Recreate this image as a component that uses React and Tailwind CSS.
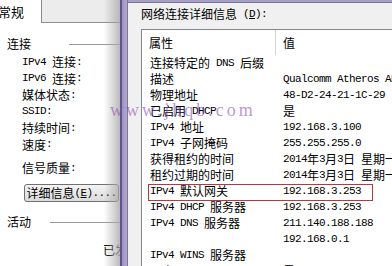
import React from "react";

function T({ s }) {
  return s
    .split(/([\x00-\x7f]+)/)
    .filter(Boolean)
    .map((p, i) =>
      /[\x00-\x7f]/.test(p[0]) ? (
        <span
          key={i}
          className="font-['Liberation_Mono',monospace] text-[11px] tracking-[-0.6px] whitespace-pre leading-none"
        >
          {p}
        </span>
      ) : (
        <span key={i} className="text-[12px] leading-none">
          {p}
        </span>
      )
    );
}

const rows = [
  ["连接特定的 DNS 后缀", ""],
  ["描述", "Qualcomm Atheros AR9285 Wireless Network Adapter"],
  ["物理地址", "48-D2-24-21-1C-29"],
  ["已启用 DHCP", "是"],
  ["IPv4 地址", "192.168.3.100"],
  ["IPv4 子网掩码", "255.255.255.0"],
  ["获得租约的时间", "2014年3月3日 星期一 9:12:32"],
  ["租约过期的时间", "2014年3月3日 星期一 11:12:32"],
  ["IPv4 默认网关", "192.168.3.253"],
  ["IPv4 DHCP 服务器", "192.168.3.253"],
  ["IPv4 DNS 服务器", "211.140.188.188"],
  ["", "192.168.0.1"],
  ["IPv4 WINS 服务器", ""],
  ["已启用 NetBIOS over Tcpip", "是"],
];

function LeftRow({ s, h = "h-[16.5px]" }) {
  return (
    <div className={`${h} flex items-center pl-[22px] whitespace-nowrap`}>
      <T s={s} />
    </div>
  );
}

export default function App() {
  return (
    <div className="relative w-[392px] h-[266px] overflow-hidden flex bg-[#f0f0f0] text-black font-['Noto_Sans_CJK_SC',sans-serif]">
      {/* Left panel */}
      <div className="relative w-[120px] h-full overflow-hidden bg-white flex flex-col shrink-0">
        <div className="h-[23px] flex shrink-0">
          <div className="w-[44px] bg-white border-r border-[#898c95] flex items-center -ml-[2px]">
            <span className="text-[13px] leading-none">常规</span>
          </div>
          <div className="flex-1 bg-[#ececec] border-b border-[#898c95]" />
        </div>
        <div className="mt-[13px] h-[16px] flex items-center pl-[7px]">
          <span className="text-[12px] leading-none">连接</span>
          <div className="ml-[38px] flex-1 h-px bg-[#9a9a9a]" />
        </div>
        <div className="mt-[2px]">
          <LeftRow s="IPv4 连接:" />
          <LeftRow s="IPv6 连接:" />
          <LeftRow s="媒体状态:" />
          <LeftRow s="SSID:" />
          <LeftRow s="持续时间:" />
          <LeftRow s="速度:" />
        </div>
        <div className="mt-[7px]">
          <LeftRow s="信号质量:" h="h-[16px]" />
        </div>
        <div className="mt-[8px] ml-[24px] w-[95px] h-[18px] rounded-[3px] border border-[#707070] bg-gradient-to-b from-[#f4f4f4] to-[#dcdcdc] flex items-center justify-center whitespace-nowrap">
          <span className="text-[12px] leading-none">详细信息</span>
          <span className="font-['Liberation_Mono',monospace] text-[11px] tracking-[-0.6px] leading-none whitespace-pre">
            (<span className="underline">E</span>)....
          </span>
        </div>
        <div className="mt-[12px] h-[16px] flex items-center pl-[7px]">
          <span className="text-[12px] leading-none">活动</span>
          <div className="ml-[19px] flex-1 h-px bg-[#9a9a9a]" />
        </div>
        <div className="mt-[12px] h-[16px] flex items-center pl-[103px] whitespace-nowrap">
          <span className="text-[12px] leading-none">已发送</span>
        </div>
        <div className="absolute right-0 top-0 bottom-0 w-[16px] bg-gradient-to-r from-transparent to-[#a9a9a9]/80" />
      </div>

      {/* Window frame */}
      <div className="w-[8px] h-full flex shrink-0">
        <div className="w-[2px] bg-[#5f5388]" />
        <div className="w-[5px] bg-gradient-to-r from-[#9d92c4] to-[#b2a9d2]" />
        <div className="w-[1px] bg-[#7b7890]" />
      </div>

      {/* Right dialog */}
      <div className="flex-1 h-full flex flex-col min-w-0">
        <div className="h-[2px] bg-[#a79dc9] shrink-0" />
        <div className="h-px bg-[#7b7890] shrink-0" />
        <div className="flex-1 flex flex-col pl-[13px] min-h-0">
          <div className="mt-[4px] h-[14px] flex items-center whitespace-nowrap">
            <span className="text-[12px] leading-none">网络连接详细信息</span>
            <span className="font-['Liberation_Mono',monospace] text-[11px] tracking-[-0.6px] leading-none whitespace-pre">
              {" ("}
              <span className="underline">D</span>
              {"):"}
            </span>
          </div>
          <div className="mt-[8px] flex-1 bg-white border-l border-t border-[#828790] flex flex-col min-h-0 overflow-hidden">
            <div className="h-[25px] flex shrink-0">
              <div className="w-[134px] border-r border-[#d5d5d5] flex items-center pl-[7px] shrink-0">
                <span className="text-[12px] leading-none">属性</span>
              </div>
              <div className="flex-1 flex items-center pl-[7px]">
                <span className="text-[12px] leading-none">值</span>
              </div>
            </div>
            {rows.map(([k, v], i) => (
              <div key={i} className="relative h-[16px] flex shrink-0 whitespace-nowrap">
                <div className="w-[134px] flex items-center pl-[8px] shrink-0 overflow-hidden">
                  <T s={k} />
                </div>
                <div className="flex-1 flex items-center pl-[7px]">
                  <T s={v} />
                </div>
                {i === 8 && (
                  <div className="absolute left-[6px] top-[1px] w-[225px] h-[17px] border border-[#b4383c]" />
                )}
              </div>
            ))}
          </div>
        </div>
      </div>

      {/* Watermark */}
      <div className="absolute left-[110px] top-[101px] text-[18px] leading-none tracking-[3px] font-['Liberation_Serif',serif] text-[#8a4fb8]/60 pointer-events-none whitespace-nowrap">
        www.jhqb.com
      </div>
    </div>
  );
}
